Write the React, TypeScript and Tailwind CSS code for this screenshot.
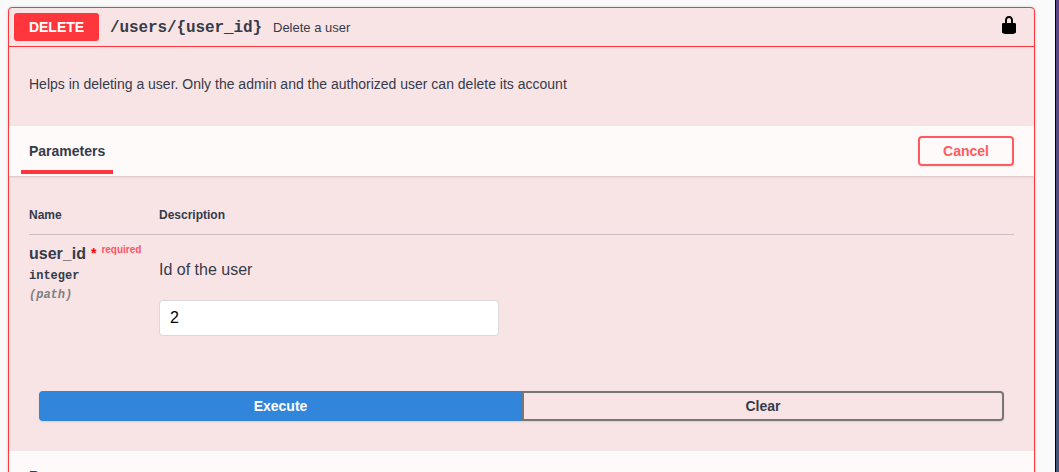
import React from "react";

function LockIcon() {
  return (
    <svg viewBox="0 0 20 20" className="h-5 w-5 fill-black" aria-hidden="true">
      <path d="M15.8 8H14V5.6C14 2.703 12.665 1 10 1 7.334 1 6 2.703 6 5.6V8H4c-.553 0-1 .646-1 1.199V17c0 .549.428 1.139.951 1.307l1.197.387C5.672 18.861 6.55 19 7.1 19h5.8c.549 0 1.428-.139 1.951-.307l1.196-.387c.524-.167.953-.757.953-1.306V9.199C17 8.646 16.352 8 15.8 8zM12 8H8V5.199C8 3.754 8.797 3 10 3c1.203 0 2 .754 2 2.199V8z" />
    </svg>
  );
}

function Summary() {
  return (
    <header className="flex h-[39px] shrink-0 items-center border-b border-[#ff373c] pl-[5px] pr-[15px]">
      <span className="flex h-7 w-[85px] items-center justify-center rounded-[3px] bg-[#ff373c] text-sm font-bold text-white">
        DELETE
      </span>
      <span className="ml-[11px] mt-0.5 w-[152px] whitespace-nowrap font-['Liberation_Mono',monospace] text-base font-bold tracking-[-0.1px]">
        /users/&#123;user_id&#125;
      </span>
      <span className="ml-[11px] mt-px text-[13px]">Delete a user</span>
      <span className="mb-[5px] ml-auto">
        <LockIcon />
      </span>
    </header>
  );
}

function ParametersHeader() {
  return (
    <div className="relative z-10 flex h-[50px] shrink-0 items-center justify-between bg-[#fefaf9] pl-3 pr-5 shadow-[0_1px_2px_rgba(0,0,0,0.15)]">
      <div className="flex h-[50px] w-[92px] flex-col">
        <h4 className="h-[44px] pl-2 text-sm font-bold leading-[50px]">Parameters</h4>
        <div className="h-1 bg-[#ff373c]" />
      </div>
      <button className="h-[30px] w-24 rounded border-2 border-[#ff5a5f] text-sm font-bold text-[#ff5a5f] shadow-[0_1px_2px_rgba(0,0,0,0.1)]">
        Cancel
      </button>
    </div>
  );
}

function Parameters() {
  return (
    <div className="flex h-[275px] shrink-0 flex-col px-5">
      <div className="flex h-[59px] shrink-0 border-b border-[#cbbfc3] pt-[31px] text-xs font-bold leading-4">
        <div className="w-[130px]">Name</div>
        <div>Description</div>
      </div>
      <div className="flex h-[156px] shrink-0">
        <div className="w-[130px] pt-[9px]">
          <div className="flex h-5 whitespace-nowrap text-base font-bold leading-5">
            <span>user_id</span>
            <span className="ml-[5px] -mt-px text-sm leading-5 text-[#ff0000]">*</span>
            <span className="ml-[5px] -mt-1 text-[10px] text-[#ff5560]">required</span>
          </div>
          <div className="mt-1 font-['Liberation_Mono',monospace] text-xs font-bold leading-4">integer</div>
          <div className="mt-[3px] font-['Liberation_Mono',monospace] text-xs font-bold italic leading-4 text-[#808080]">
            (path)
          </div>
        </div>
        <div className="pt-[23px]">
          <p className="text-base leading-6">Id of the user</p>
          <input
            className="mt-[18px] block h-9 w-[340px] rounded border border-[#d9d9d9] bg-white px-[10px] text-base text-black outline-none"
            defaultValue="2"
            aria-label="user_id"
          />
        </div>
      </div>
      <div className="flex h-[30px] px-[10px] text-sm font-bold">
        <button className="w-[483px] rounded-l border-2 border-[#3186dc] bg-[#3186dc] text-white shadow-[0_1px_2px_rgba(0,0,0,0.1)]">
          Execute
        </button>
        <button className="flex-1 rounded-r border-2 border-[#777777] shadow-[0_1px_2px_rgba(0,0,0,0.1)]">
          Clear
        </button>
      </div>
    </div>
  );
}

export default function App() {
  return (
    <div className="flex h-[472px] overflow-hidden bg-[#fafafa] font-['Liberation_Sans',Arial,sans-serif] text-[#353b4b]">
      <main className="ml-2 mt-[7px] flex h-[520px] w-[1027px] shrink-0 flex-col overflow-hidden rounded border border-[#ff373c] bg-[#f8e4e5] shadow-[0_0_3px_rgba(0,0,0,0.19)]">
        <Summary />
        <p className="h-[79px] shrink-0 px-5 pt-[29px] text-sm leading-4">
          Helps in deleting a user. Only the admin and the authorized user can delete its account
        </p>
        <ParametersHeader />
        <Parameters />
        <div className="h-[50px] shrink-0 bg-[#fefaf9] px-5 text-sm font-bold leading-[50px]">Responses</div>
      </main>
      <div className="ml-auto h-full w-1 border-l border-black bg-linear-to-b from-[#5b4589] to-[#435579]" />
    </div>
  );
}
